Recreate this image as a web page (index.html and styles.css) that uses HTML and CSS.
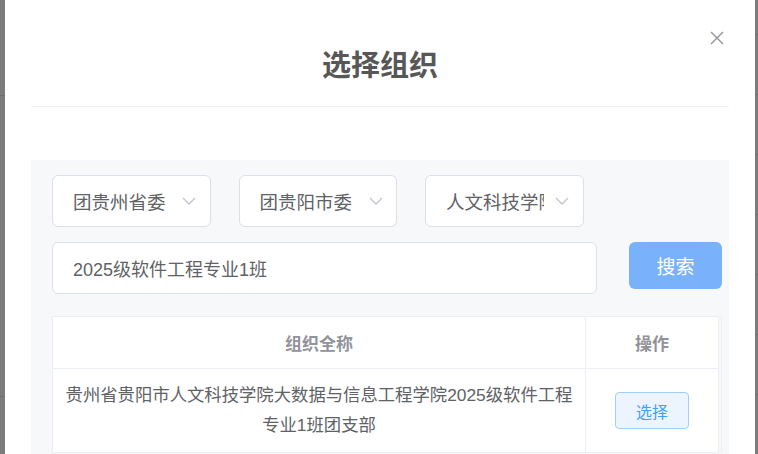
FILE: index.html
```html
<!DOCTYPE html>
<html lang="zh-CN">
<head>
<meta charset="utf-8">
<title>选择组织</title>
<link rel="stylesheet" href="styles.css">
</head>
<body>
<div class="strip strip-left"></div>
<div class="dialog">
  <button class="close" aria-label="关闭">
    <svg width="14" height="14" viewBox="0 0 14 14"><path d="M1 1L13 13M13 1L1 13" stroke="#909399" stroke-width="1.4" fill="none"/></svg>
  </button>
  <div class="header">选择组织</div>
  <div class="panel">
    <div class="filters">
      <div class="select"><span class="select-text">团贵州省委</span><svg class="chev" width="14" height="8" viewBox="0 0 14 8"><path d="M1 1L7 7L13 1" stroke="#c0c4cc" stroke-width="1.3" fill="none"/></svg></div>
      <div class="select"><span class="select-text">团贵阳市委</span><svg class="chev" width="14" height="8" viewBox="0 0 14 8"><path d="M1 1L7 7L13 1" stroke="#c0c4cc" stroke-width="1.3" fill="none"/></svg></div>
      <div class="select"><span class="select-text">人文科技学院</span><svg class="chev" width="14" height="8" viewBox="0 0 14 8"><path d="M1 1L7 7L13 1" stroke="#c0c4cc" stroke-width="1.3" fill="none"/></svg></div>
    </div>
    <div class="search-row">
      <div class="input">2025级软件工程专业1班</div>
      <button class="btn-search">搜索</button>
    </div>
    <div class="table-wrap">
      <div class="table">
        <div class="th">组织全称</div>
        <div class="th">操作</div>
        <div class="td td-name">贵州省贵阳市人文科技学院大数据与信息工程学院2025级软件工程<br>专业1班团支部</div>
        <div class="td td-op"><button class="btn-select">选择</button></div>
      </div>
    </div>
  </div>
</div>
<div class="strip strip-right"></div>
</body>
</html>
```

FILE: styles.css
```css
html, body {
  margin: 0;
  padding: 0;
}
body {
  width: 758px;
  height: 454px;
  overflow: hidden;
  display: flex;
  background: #7c7c7c;
  font-family: "Liberation Sans", "Noto Sans CJK SC", sans-serif;
}
.strip {
  height: 454px;
}
.strip-left {
  width: 5px;
  flex: none;
  background:
    linear-gradient(#6f6f6f, #6f6f6f) 0 95px / 5px 1px no-repeat,
    linear-gradient(#6f6f6f, #6f6f6f) 0 396px / 5px 1px no-repeat,
    #7c7c7c;
}
.strip-right {
  flex: 1;
  background:
    repeating-linear-gradient(to bottom, transparent 0, transparent 34px, #6f6f6f 34px, #6f6f6f 35px, transparent 35px, transparent 60px),
    #7c7c7c;
}
.dialog {
  position: relative;
  width: 750px;
  flex: none;
  box-sizing: border-box;
  padding: 0 26px;
  background: #fff;
  height: 454px;
  overflow: hidden;
}
.close {
  position: absolute;
  top: 31px;
  right: 31px;
  width: 14px;
  height: 14px;
  padding: 0;
  border: 0;
  background: none;
  display: flex;
}
.header {
  padding: 46px 0 20px;
  line-height: 40px;
  font-size: 29px;
  font-weight: bold;
  color: #575757;
  text-align: center;
  border-bottom: 1px solid #f0f1f4;
}
.panel {
  margin-top: 53px;
  background: #f7f8fa;
  padding: 15px 7px 20px 21px;
  min-height: 300px;
}
.filters {
  display: flex;
  gap: 28px;
}
.select {
  width: 158.5px;
  height: 52px;
  box-sizing: border-box;
  border: 1px solid #dcdfe6;
  border-radius: 6px;
  background: #fff;
  display: flex;
  align-items: center;
  padding-left: 20px;
}
.select-text {
  width: 98px;
  overflow: hidden;
  white-space: nowrap;
  font-size: 18.5px;
  color: #606266;
  flex: none;
}
.chev {
  margin-left: 11px;
  flex: none;
}
.search-row {
  display: flex;
  gap: 32px;
  margin-top: 15px;
  align-items: flex-start;
}
.input {
  width: 545px;
  height: 52px;
  box-sizing: border-box;
  border: 1px solid #dcdfe6;
  border-radius: 6px;
  background: #fff;
  padding-left: 20px;
  display: flex;
  align-items: center;
  font-size: 18px;
  color: #606266;
}
.btn-search {
  width: 93px;
  height: 47px;
  border: 0;
  border-radius: 6px;
  background: #79b1fa;
  color: #fff;
  font-family: inherit;
  font-size: 19px;
  padding: 0;
}
.table-wrap {
  margin-top: 22px;
  display: flex;
}
.table-wrap::after {
  content: "";
  width: 1px;
  margin-left: 2px;
  background: #eceef2;
}
.table {
  display: grid;
  grid-template-columns: 533px 133px;
  border-top: 1px solid #ebeef5;
  border-left: 1px solid #ebeef5;
  background: #fff;
}
.th, .td {
  box-sizing: border-box;
  border-right: 1px solid #ebeef5;
  border-bottom: 1px solid #ebeef5;
}
.th {
  height: 52px;
  display: flex;
  align-items: center;
  justify-content: center;
  font-size: 17px;
  font-weight: bold;
  color: #909399;
}
.td-name {
  padding: 11px 4px 12px;
  line-height: 30px;
  font-size: 17.35px;
  color: #606266;
  text-align: center;
  white-space: nowrap;
}
.td-op {
  display: flex;
  align-items: center;
  justify-content: center;
}
.btn-select {
  width: 74px;
  height: 37px;
  border: 1px solid #a0cfff;
  border-radius: 4px;
  background: #ecf5ff;
  color: #409eff;
  font-family: inherit;
  font-size: 16px;
  padding: 0;
}
```
